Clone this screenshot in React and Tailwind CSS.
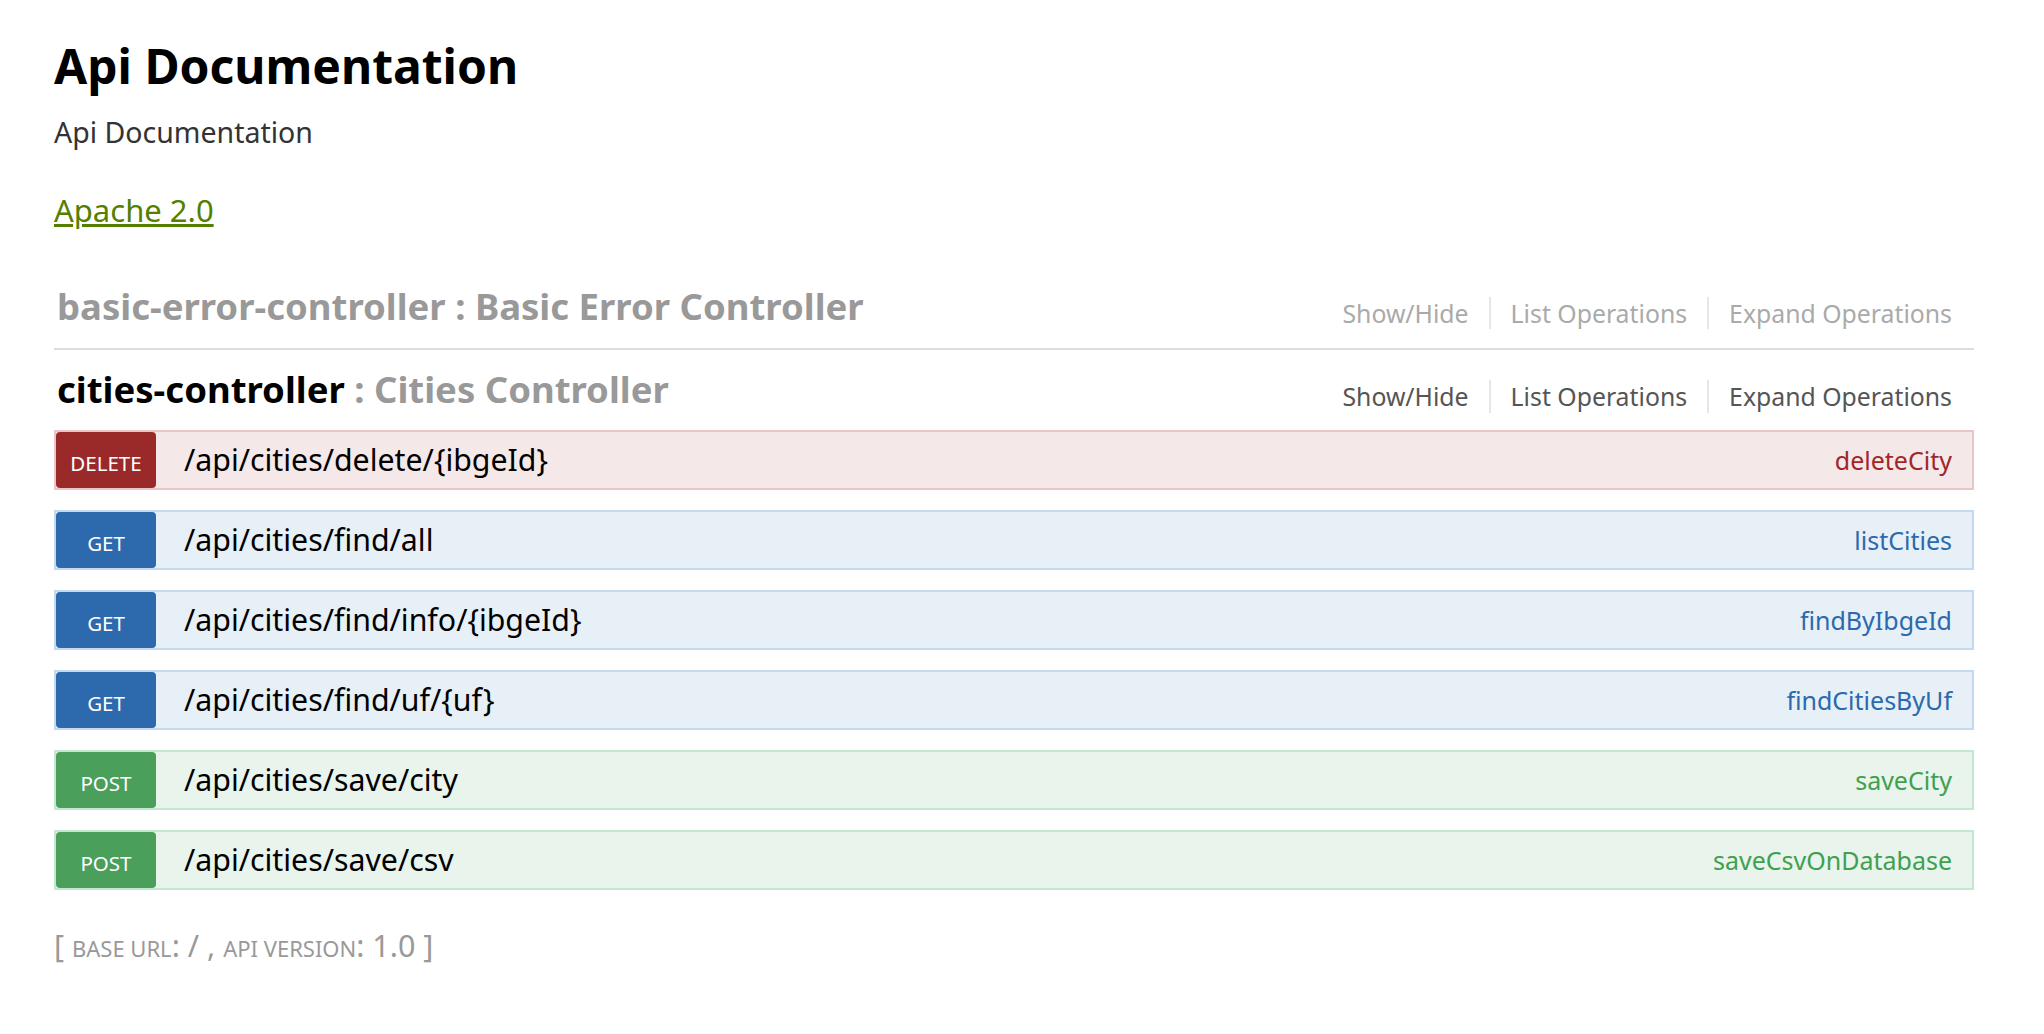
import { Fragment } from "react";

const operations = [
  { method: "DELETE", path: "/api/cities/delete/{ibgeId}", name: "deleteCity" },
  { method: "GET", path: "/api/cities/find/all", name: "listCities" },
  { method: "GET", path: "/api/cities/find/info/{ibgeId}", name: "findByIbgeId" },
  { method: "GET", path: "/api/cities/find/uf/{uf}", name: "findCitiesByUf" },
  { method: "POST", path: "/api/cities/save/city", name: "saveCity" },
  { method: "POST", path: "/api/cities/save/csv", name: "saveCsvOnDatabase" },
];

const methodStyles = {
  DELETE: {
    row: "bg-[#f5e8e8] border-[#e8c6c7]",
    badge: "bg-[#9a2a2a]",
    name: "text-[#a12629]",
  },
  GET: {
    row: "bg-[#e7eff7] border-[#c5d9ec]",
    badge: "bg-[#2c69ad]",
    name: "text-[#2c69ad]",
  },
  POST: {
    row: "bg-[#e8f4ec] border-[#c5e6d0]",
    badge: "bg-[#4aa05a]",
    name: "text-[#3fa050]",
  },
};

function Options({ active }) {
  const items = ["Show/Hide", "List Operations", "Expand Operations"];
  return (
    <ul className="flex mt-[9px] mr-[22px]">
      {items.map((item, i) => (
        <li
          key={item}
          className={
            i === items.length - 1
              ? "pl-[20px] py-[4px]"
              : "px-[20px] py-[4px] border-r-2 border-[#e6e6e6]"
          }
        >
          <a
            className={
              "block text-[24.8px] leading-[24.5px] " +
              (active ? "text-[#555]" : "text-[#aaa]")
            }
          >
            {item}
          </a>
        </li>
      ))}
    </ul>
  );
}

function Operation({ op }) {
  const s = methodStyles[op.method];
  return (
    <li className={"flex items-center h-[60px] border-2 " + s.row}>
      <span
        className={
          "flex items-center justify-center w-[100px] h-full rounded-[4px] pt-[6px] text-[20.5px] leading-[20px] text-white " +
          s.badge
        }
      >
        {op.method}
      </span>
      <span className="ml-[28px] text-[30.3px] leading-[30px] text-black">
        {op.path}
      </span>
      <span className={"ml-auto mr-[20px] text-[25px] leading-[25px] " + s.name}>
        {op.name}
      </span>
    </li>
  );
}

export default function App() {
  return (
    <div className="min-h-screen bg-white font-['Noto_Sans',sans-serif]">
      <div className="w-[1920px] ml-[54px] pt-[42px]">
        <h1 className="text-[48px] leading-[48px] font-bold text-black">
          Api Documentation
        </h1>
        <p className="mt-[28px] text-[28.5px] leading-[28.5px] text-[#333]">
          Api Documentation
        </p>
        <div className="mt-[48px] text-[31px] leading-[31px]">
          <a className="text-[#547f00] underline">Apache 2.0</a>
        </div>

        <ul className="mt-[62px]">
          <li className="border-b-2 border-[#ddd]">
            <div className="flex items-start justify-between pb-[19px]">
              <h2 className="pl-[3px] text-[36.5px] leading-[36.5px] font-bold text-[#999]">
                basic-error-controller : Basic Error Controller
              </h2>
              <Options active={false} />
            </div>
          </li>
          <li>
            <div className="flex items-start justify-between pt-[21px] pb-[17.5px]">
              <h2 className="pl-[3px] text-[36.5px] leading-[36.5px] font-bold">
                <span className="text-black">cities-controller</span>
                <span className="text-[#999]"> : Cities Controller</span>
              </h2>
              <Options active={true} />
            </div>
            <ul className="flex flex-col gap-[20px]">
              {operations.map((op) => (
                <Operation key={op.path} op={op} />
              ))}
            </ul>
          </li>
        </ul>

        <h4 className="mt-[40px] text-[30.5px] leading-[30px] text-[#999]">
          [ <span className="text-[22px]">BASE URL</span>: / ,{" "}
          <span className="text-[22px]">API VERSION</span>: 1.0 ]
        </h4>
      </div>
    </div>
  );
}
